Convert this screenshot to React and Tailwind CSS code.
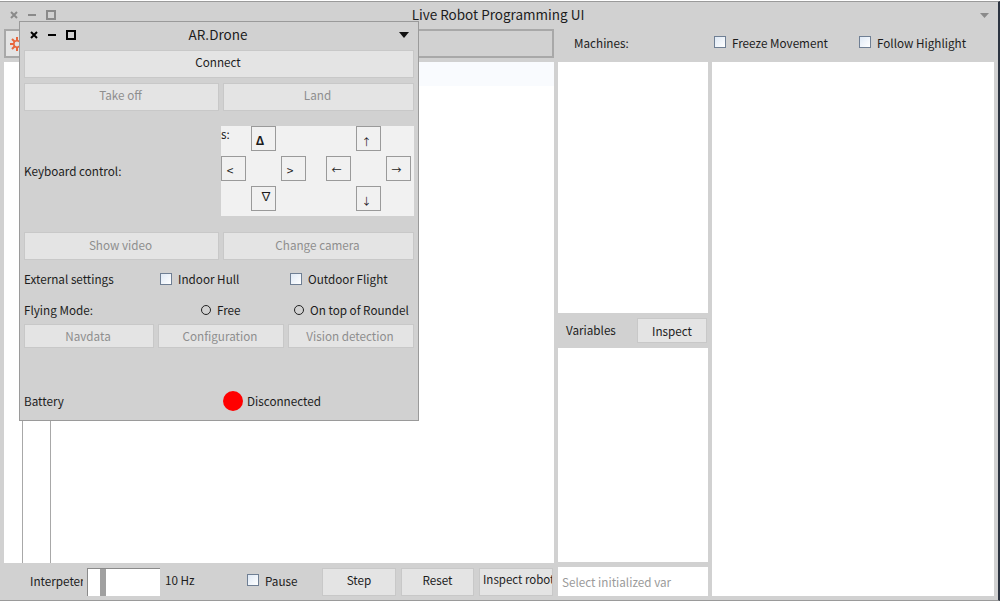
const font = { fontFamily: '"Noto Sans CJK SC", sans-serif' };

function Btn({ children, disabled, className = '' }) {
  return (
    <div
      className={`flex items-center justify-center bg-[#e4e4e4] border border-[#c8c8c8] text-[11.7px] whitespace-nowrap overflow-hidden ${disabled ? 'text-[#8e8e8e]' : 'text-[#1c1c1c]'} ${className}`}
    >
      {children}
    </div>
  );
}

function Check({ label, className = '' }) {
  return (
    <div className={`flex items-center gap-[6px] text-[11.7px] text-[#1c1c1c] whitespace-nowrap ${className}`}>
      <div className="w-[12px] h-[12px] border border-[#6f7f94] bg-gradient-to-br from-[#dfe9f5] to-white shrink-0" />
      <span>{label}</span>
    </div>
  );
}

function Radio({ label, className = '' }) {
  return (
    <div className={`flex items-center gap-[6px] text-[11.7px] text-[#1c1c1c] whitespace-nowrap shrink-0 ${className}`}>
      <div className="w-[10px] h-[10px] rounded-full border border-[#222]" />
      <span>{label}</span>
    </div>
  );
}

function Key({ children, className = '' }) {
  return (
    <div className={`absolute w-[25px] h-[25px] flex items-center justify-center border border-[#9a9a9a] bg-[#f1f1f1] text-[12px] text-[#1c1c1c] ${className}`}>
      {children}
    </div>
  );
}

function WinButtons({ muted }) {
  const c = muted ? '#8a8a8a' : '#000';
  return (
    <div className="flex items-center">
      <svg width="10" height="10" viewBox="0 0 10 10" className="mr-[9px]">
        <path d="M2 2 L8 8 M8 2 L2 8" stroke={c} strokeWidth="2" />
      </svg>
      <div className="w-[8px] h-[2px] mr-[10px]" style={{ background: c }} />
      <div className="w-[10px] h-[10px] border-2" style={{ borderColor: c }} />
    </div>
  );
}

function DroneWindow() {
  return (
    <div className="absolute left-[19px] top-[21px] w-[400px] h-[400px] bg-[#d1d1d1] border border-[#9a9a9a] flex flex-col px-[4px]">
      <div className="relative flex items-center justify-center h-[28px] pb-[3px] pr-[2px] text-[13.5px] text-[#1c1c1c] shrink-0">
        <div className="absolute left-[5px] top-[8px]"><WinButtons /></div>
        AR.Drone
        <svg width="10" height="6" viewBox="0 0 10 6" className="absolute right-[5px] top-[10px]">
          <path d="M0 0 H10 L5 6 Z" fill="#111" />
        </svg>
      </div>
      <Btn className="h-[28px] pb-[4px] pr-[2px]">Connect</Btn>
      <div className="flex gap-[4px] mt-[5px]">
        <Btn disabled className="w-[195px] h-[28px] pb-[4px] pr-[2px]">Take off</Btn>
        <Btn disabled className="w-[191px] h-[28px] pb-[4px] pr-[2px]">Land</Btn>
      </div>
      <div className="flex h-[90px] mt-[15px]">
        <div className="w-[197px] flex items-center text-[11.7px] text-[#1c1c1c]">Keyboard control:</div>
        <div className="relative w-[193px] bg-[#f1f1f1] text-[11.7px] text-[#1c1c1c] leading-none pt-[2px]">
          s:
          <Key className="left-[30px] top-0 pr-[7px] pt-[2px] font-bold">Δ</Key>
          <Key className="left-0 top-[30px] pr-[7px] pt-[2px]">&lt;</Key>
          <Key className="left-[60px] top-[30px] pr-[7px] pt-[2px]">&gt;</Key>
          <Key className="left-[30px] top-[60px] pb-[6px] pl-[5px]">∇</Key>
          <Key className="left-[135px] top-0 pr-[4px] pt-[6px] text-[#1a2f6b] !text-[10px]">↑</Key>
          <Key className="left-[105px] top-[30px] pr-[4px] pt-[2px] text-[#1a2f6b] !text-[10px]">←</Key>
          <Key className="left-[165px] top-[30px] pr-[4px] pt-[2px] text-[#1a2f6b] !text-[10px]">→</Key>
          <Key className="left-[135px] top-[60px] pr-[4px] pt-[4px] text-[#1a2f6b] !text-[10px]">↓</Key>
        </div>
      </div>
      <div className="flex gap-[4px] mt-[16px]">
        <Btn disabled className="w-[195px] h-[28px] pb-[2px] pr-[2px]">Show video</Btn>
        <Btn disabled className="w-[191px] h-[28px] pb-[2px] pr-[2px]">Change camera</Btn>
      </div>
      <div className="flex items-center h-[20px] mt-[9px] text-[11.7px] text-[#1c1c1c]">
        <span className="w-[136px] shrink-0">External settings</span>
        <Check label="Indoor Hull" className="w-[130px] shrink-0" />
        <Check label="Outdoor Flight" />
      </div>
      <div className="flex items-center h-[20px] mt-[11px] text-[11.7px] text-[#1c1c1c]">
        <span className="w-[177px] shrink-0">Flying Mode:</span>
        <Radio label="Free" className="w-[93px]" />
        <Radio label="On top of Roundel" />
      </div>
      <div className="flex gap-[4px] mt-[4px]">
        <Btn disabled className="w-[130px] h-[24px] pr-[2px]">Navdata</Btn>
        <Btn disabled className="w-[126px] h-[24px] pr-[2px]">Configuration</Btn>
        <Btn disabled className="w-[126px] h-[24px] pr-[2px]">Vision detection</Btn>
      </div>
      <div className="flex items-center mt-[43px] text-[11.7px] text-[#1c1c1c]">
        <span className="w-[199px] shrink-0">Battery</span>
        <div className="w-[20px] h-[20px] rounded-full bg-[#ff0000] mr-[4px] shrink-0" />
        <span>Disconnected</span>
      </div>
    </div>
  );
}

export default function App() {
  return (
    <div style={font} className="relative w-[1000px] h-[602px] overflow-hidden bg-white">
      <div className="w-[1000px] h-[600px] mt-[1px] bg-[#d1d1d1] border-t border-b border-r-2 border-t-[#9a9a9a] border-b-[#9a9a9a] border-r-[#2b3340] flex flex-col">
        {/* title bar */}
        <div className="relative flex items-center justify-center h-[27px] shrink-0 pb-[2px] pr-[2px] text-[13.5px] text-[#1c1c1c]">
          <div className="absolute left-[9px] top-[8px]"><WinButtons muted /></div>
          Live Robot Programming UI
          <svg width="9" height="5" viewBox="0 0 9 5" className="absolute right-[9px] top-[11px]">
            <path d="M0 0 H9 L4.5 5 Z" fill="#8a8a8a" />
          </svg>
        </div>

        <div className="flex flex-1 min-h-0 pl-[4px] pr-[4px] pb-[4px]">
          {/* left column */}
          <div className="w-[550px] flex flex-col shrink-0">
            <div className="h-[29px] shrink-0 border-2 border-[#a8a8a8] bg-[#d1d1d1] flex">
              <div className="w-[22px] bg-[#e4e4e4] flex items-center justify-center">
                <svg width="14" height="14" viewBox="0 0 14 14">
                  <path d="M7 0 V4 M7 10 V14 M0 7 H4 M10 7 H14 M2 2 L4.5 4.5 M12 2 L9.5 4.5 M2 12 L4.5 9.5 M12 12 L9.5 9.5" stroke="#e8663c" strokeWidth="2" />
                  <circle cx="7" cy="7" r="3.2" fill="none" stroke="#e8663c" strokeWidth="1.6" />
                </svg>
              </div>
            </div>
            <div className="flex-1 min-h-0 mt-[4px] bg-white flex">
              <div className="w-[19px] border-r border-[#a8a8a8]" />
              <div className="w-[28px] border-r border-[#a8a8a8]" />
              <div className="flex-1">
                <div className="h-[24px] bg-[#f9fbfe]" />
              </div>
            </div>
            <div className="h-[33px] shrink-0 pt-[4px] flex items-center text-[11.7px] text-[#1c1c1c]">
              <div className="w-[53px] ml-[26px] mr-[4px] mb-[2px] overflow-hidden whitespace-nowrap shrink-0">Interpeter</div>
              <div className="w-[73px] h-[28px] bg-white border-t border-l border-[#8a8a8a] flex shrink-0 pl-[12px]">
                <div className="w-[6px] h-full bg-[#a0a0a0]" />
              </div>
              <span className="w-[82px] ml-[5px] mb-[3px] shrink-0">10 Hz</span>
              <Check label="Pause" className="w-[75px] mb-[2px] shrink-0" />
              <Btn className="w-[74px] h-[28px] pb-[4px] shrink-0">Step</Btn>
              <Btn className="w-[73px] h-[28px] pb-[4px] ml-[5px] shrink-0">Reset</Btn>
              <Btn className="w-[74px] h-[28px] pb-[4px] ml-[5px] shrink-0 !justify-start pl-[3px] !text-[11.5px]">Inspect robot</Btn>
            </div>
          </div>

          {/* middle column */}
          <div className="w-[150px] ml-[4px] flex flex-col shrink-0 text-[11.7px] text-[#1c1c1c]">
            <div className="h-[29px] shrink-0 pb-[2px] flex items-center pl-[16px]">Machines:</div>
            <div className="h-[251px] shrink-0 mt-[4px] bg-white" />
            <div className="flex items-center justify-between h-[35px] shrink-0 pl-[8px] pr-[1px]">
              <span className="mb-[2px]">Variables</span>
              <Btn className="w-[70px] h-[25px]">Inspect</Btn>
            </div>
            <div className="flex-1 min-h-0 bg-white" />
            <div className="h-[29px] shrink-0 mt-[5px] bg-white flex items-center pl-[4px] text-[#9a9a9a]">
              Select initialized var
            </div>
          </div>

          {/* right column */}
          <div className="flex-1 min-w-0 ml-[4px] flex flex-col">
            <div className="h-[29px] shrink-0 pb-[2px] flex items-center">
              <Check label="Freeze Movement" className="w-[145px] ml-[2px] shrink-0" />
              <Check label="Follow Highlight" />
            </div>
            <div className="flex-1 min-h-0 mt-[4px] bg-white" />
          </div>
        </div>
      </div>
      <DroneWindow />
    </div>
  );
}
